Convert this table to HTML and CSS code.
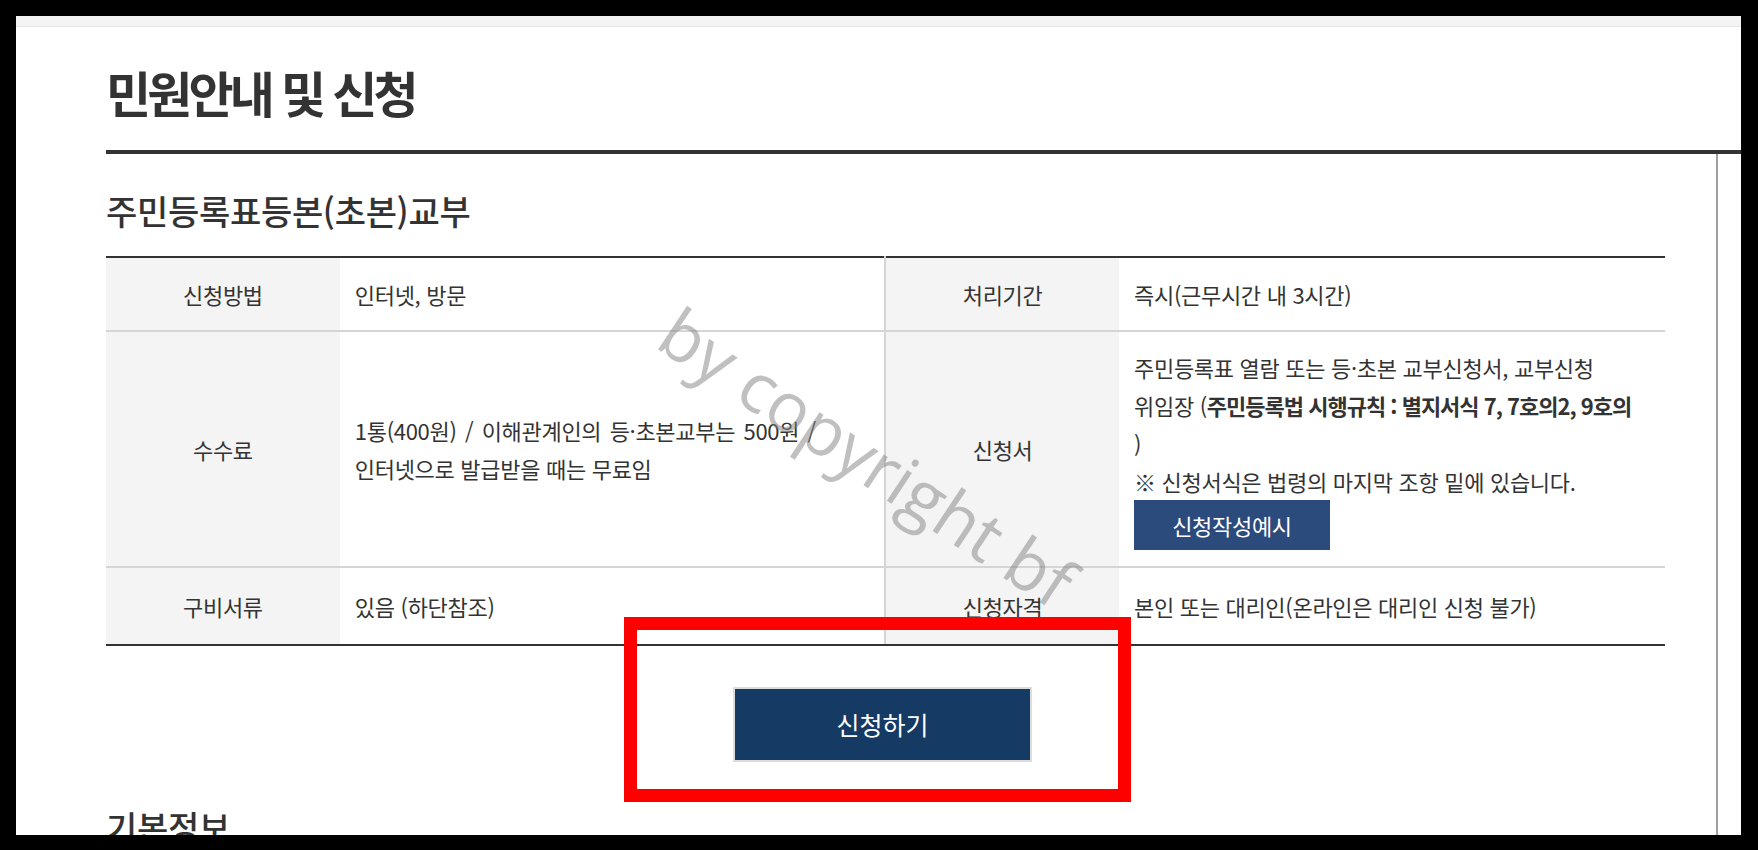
FILE: index.html
```html
<!DOCTYPE html>
<html lang="ko">
<head>
    <meta charset="UTF-8">
    <meta name="viewport" content="width=device-width, initial-scale=1.0">
    <title>민원안내 및 신청</title>
    <link rel="stylesheet" href="styles.css">
</head>
<body>
    <div class="screen">
        <div class="topbar"></div>

        <div class="page">
            <div class="page-head">
                <h1>민원안내 및 신청</h1>
            </div>

            <div class="page-body">
                <h2 class="sec-title">주민등록표등본(초본)교부</h2>

                <table class="info">
                    <colgroup>
                        <col class="c-th">
                        <col class="c-td">
                        <col class="c-th">
                        <col class="c-td">
                    </colgroup>
                    <tr>
                        <th>신청방법</th>
                        <td>인터넷, 방문</td>
                        <th class="sep">처리기간</th>
                        <td>즉시(근무시간 내 3시간)</td>
                    </tr>
                    <tr>
                        <th>수수료</th>
                        <td><span class="fee">1통(400원) / 이해관계인의 등·초본교부는 500원 /</span><br>인터넷으로 발급받을 때는 무료임</td>
                        <th class="sep">신청서</th>
                        <td class="form-cell">
                            주민등록표 열람 또는 등·초본 교부신청서, 교부신청<br>
                            <span class="nowrap">위임장 (<b>주민등록법 시행규칙 : 별지서식 7, 7호의2, 9호의</b></span><br>
                            )<br>
                            ※ 신청서식은 법령의 마지막 조항 밑에 있습니다.<br>
                            <a class="btn-sample" href="#">신청작성예시</a>
                        </td>
                    </tr>
                    <tr class="last">
                        <th>구비서류</th>
                        <td>있음 (하단참조)</td>
                        <th class="sep">신청자격</th>
                        <td>본인 또는 대리인(온라인은 대리인 신청 불가)</td>
                    </tr>
                </table>

                <div class="apply">
                    <a class="btn-apply" href="#">신청하기</a>
                </div>

                <h2 class="sec-title">기본정보</h2>
            </div>
        </div>

        <!-- 캡처 위에 올린 표시들 -->
        <div class="mark-box"></div>
        <div class="watermark">by copyright bf</div>
    </div>
</body>
</html>
```

FILE: styles.css
```css
html, body {
    margin: 0;
    height: 100%;
    background: #000;
}

body {
    font-family: "Noto Sans CJK KR", "Noto Sans", sans-serif;
    color: #333;
}

.screen {
    position: relative;
    margin: 16px 17px 0 16px;
    height: 819px;
    background: #fff;
    overflow: hidden;
}

.topbar {
    height: 10px;
    background: #f5f4f4;
    border-bottom: 1px solid #e6e6e6;
}

.page {
    padding-left: 90px;
}

.page-head {
    padding: 35px 0 28px;
    border-bottom: 4px solid #333;
}

.page-head h1 {
    margin: 0;
    font-size: 49px;
    line-height: 60px;
    font-weight: 700;
    letter-spacing: -3.8px;
    color: #333;
}

.page-body {
    width: 1610px;
    border-right: 2px solid #a0a0a0;
    padding-top: 34px;
}

.sec-title {
    margin: 0 0 22px;
    font-size: 34px;
    line-height: 46px;
    font-weight: 500;
    letter-spacing: -0.3px;
    color: #333;
}

/* 표 */
.info {
    width: 1559px;
    border-collapse: collapse;
    border-top: 2px solid #333;
    font-size: 22px;
    line-height: 38px;
    letter-spacing: -0.3px;
    color: #333;
}

.c-th { width: 234px; }
.c-td { width: 546px; }

.info th,
.info td {
    height: 74px;
    padding: 16px 15px;
    border-bottom: 2px solid #d5d5d5;
    text-align: left;
    vertical-align: middle;
    box-sizing: border-box;
}

.info th {
    background: #f4f4f4;
    font-weight: 400;
    text-align: center;
}

.info th.sep {
    border-left: 2px solid #d5d5d5;
}

.info tr.last th,
.info tr.last td {
    height: 78px;
    border-bottom-color: #333;
}

.info .fee {
    word-spacing: 2.5px;
}

.info b {
    font-weight: 700;
    letter-spacing: -1px;
}

.nowrap {
    white-space: nowrap;
}

.btn-sample {
    display: inline-block;
    width: 196px;
    height: 50px;
    line-height: 50px;
    background: #2c4b7d;
    color: #fff;
    text-align: center;
    text-decoration: none;
    vertical-align: top;
}

/* 신청 버튼 */
.apply {
    width: 1553px;
    padding: 41px 0 42px;
    text-align: center;
}

.btn-apply {
    display: inline-block;
    width: 295px;
    height: 71px;
    line-height: 71px;
    background: #153a63;
    border: 2px solid #dcdcdc;
    color: #fff;
    font-size: 25px;
    text-decoration: none;
}

/* 빨간 테두리 표시 */
.mark-box {
    position: absolute;
    left: 608px;
    top: 601px;
    width: 507px;
    height: 185px;
    border: 13px solid #ff0000;
    box-sizing: border-box;
}

.watermark {
    position: absolute;
    left: 852px;
    top: 440px;
    transform: translate(-50%, -50%) rotate(33.5deg);
    font-family: "Open Sans", sans-serif;
    font-size: 69px;
    font-weight: 400;
    color: rgba(130, 130, 130, 0.5);
    white-space: nowrap;
    pointer-events: none;
}
```
